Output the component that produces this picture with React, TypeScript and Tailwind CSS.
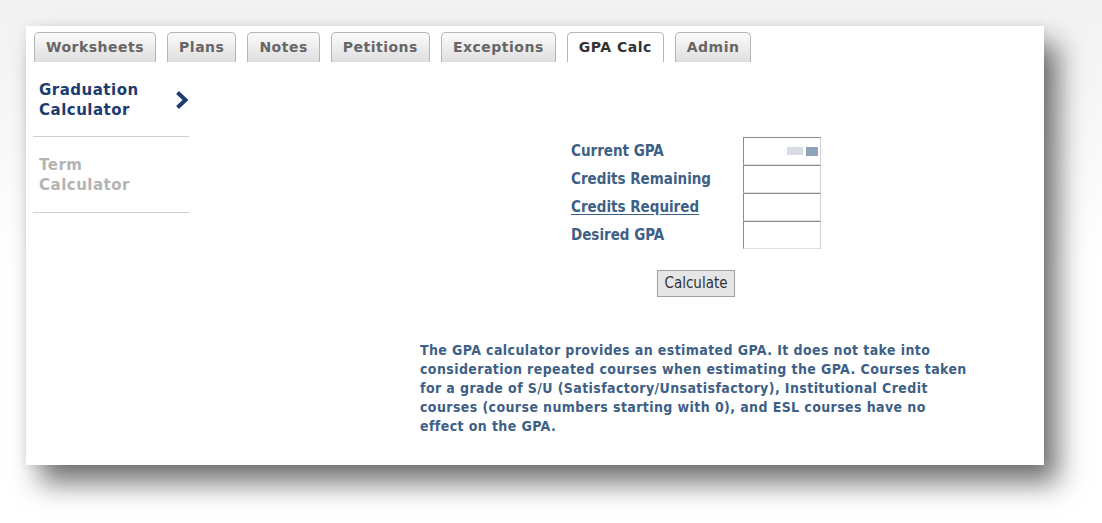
import React from "react";

const tabs = ["Worksheets", "Plans", "Notes", "Petitions", "Exceptions", "GPA Calc", "Admin"];

function Tab({ label, active }: { label: string; active: boolean }) {
  return (
    <div
      className={
        "h-[30px] px-[11px] flex items-center rounded-t-[5px] border border-b-0 border-[#b5b5b5] text-[14px] font-bold tracking-[0.5px] " +
        (active
          ? "bg-white text-[#333333]"
          : "bg-gradient-to-b from-[#fbfbfb] to-[#dedede] text-[#666666]")
      }
      style={{ fontFamily: '"DejaVu Sans", Verdana, sans-serif' }}
    >
      {label}
    </div>
  );
}

function Field({ label, link, value }: { label: string; link?: boolean; value?: boolean }) {
  return (
    <div className="flex items-center h-[28px]">
      <div
        className={"w-[172px] text-[15px] font-bold text-[#3e5f86] " + (link ? "underline underline-offset-2" : "")}
      >
        {label}
      </div>
      <div className="w-[78px] h-[28px] border-t border-l border-[#8a8a8a] border-r border-r-[#d0d0d0] border-b border-b-[#e0e0e0] bg-white flex items-center justify-end pr-[2px]">
        {value && (
          <div className="flex items-center gap-[3px] blur-[0.6px]">
            <div className="w-[16px] h-[8px] bg-[#d8dde4]" />
            <div className="w-[12px] h-[9px] bg-[#8fa3bd]" />
          </div>
        )}
      </div>
    </div>
  );
}

export default function App() {
  return (
    <div className="w-[1102px] h-[523px] bg-gradient-to-b from-[#f2f2f2] via-white to-white pl-[26px] pt-[26px] overflow-hidden">
      <div
        className="w-[1018px] h-[439px] bg-white shadow-[0_0_10px_rgba(0,0,0,0.07),14px_18px_26px_rgba(0,0,0,0.55)] flex flex-col"
        style={{ fontFamily: '"DejaVu Sans Condensed", Tahoma, "DejaVu Sans", sans-serif' }}
      >
        <div className="flex gap-[11px] pl-[8px] pt-[6px]">
          {tabs.map((t) => (
            <Tab key={t} label={t} active={t === "GPA Calc"} />
          ))}
        </div>
        <div className="flex flex-1">
          <div className="w-[156px] ml-[7px] flex flex-col" style={{ fontFamily: '"DejaVu Sans", Verdana, sans-serif' }}>
            <div className="h-[75px] border-b border-[#cfcfcf] flex items-start pt-[18px] pl-[6px]">
              <div className="text-[15px] font-bold leading-[20px] tracking-[0.5px] text-[#1d3b6f] flex-1">
                Graduation
                <br />
                Calculator
              </div>
              <svg width="14" height="18" viewBox="0 0 14 18" className="mt-[11px] mr-[0px]">
                <polyline points="2.5,1.5 10.5,9 2.5,16.5" fill="none" stroke="#1d3b6f" strokeWidth="4" strokeLinejoin="miter" />
              </svg>
            </div>
            <div className="h-[76px] border-b border-[#cfcfcf] pt-[18px] pl-[6px]">
              <div className="text-[15px] font-bold leading-[20px] tracking-[0.5px] text-[#b4b4b4]">
                Term
                <br />
                Calculator
              </div>
            </div>
          </div>
          <div className="flex-1 flex flex-col">
            <div className="ml-[382px] mt-[75px] flex flex-col">
              <Field label="Current GPA" value />
              <Field label="Credits Remaining" />
              <Field label="Credits Required" link />
              <Field label="Desired GPA" />
            </div>
            <div className="ml-[468px] mt-[21px]">
              <button className="w-[78px] h-[27px] bg-[#e6e6e6] border border-[#a0a0a0] text-[15px] text-[#333] flex items-center justify-center">
                Calculate
              </button>
            </div>
            <p className="ml-[231px] mt-[44px] w-[552px] text-[14px] font-bold leading-[19px] tracking-[0.4px] text-[#3e5f86]">
              The GPA calculator provides an estimated GPA. It does not take into consideration repeated courses when
              estimating the GPA. Courses taken for a grade of S/U (Satisfactory/Unsatisfactory), Institutional Credit
              courses (course numbers starting with 0), and ESL courses have no effect on the GPA.
            </p>
          </div>
        </div>
      </div>
    </div>
  );
}
